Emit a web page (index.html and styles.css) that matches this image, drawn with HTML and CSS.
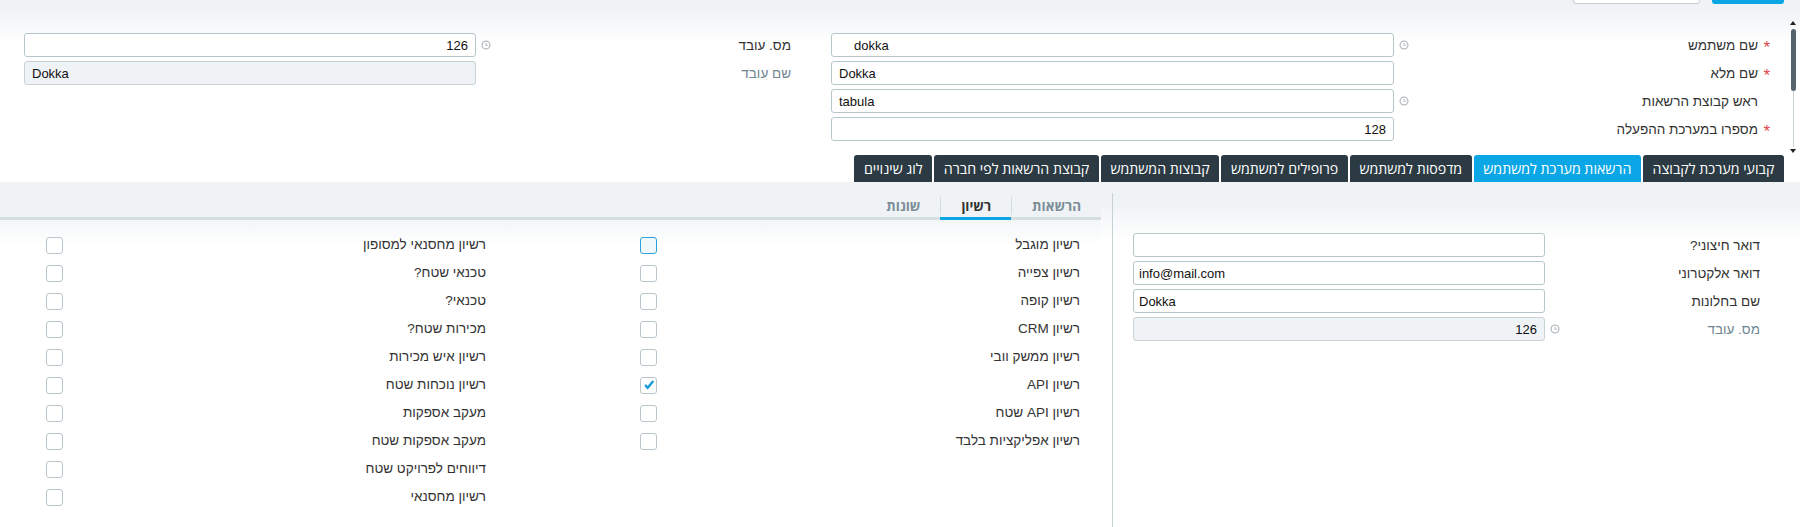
FILE: index.html
```html
<!DOCTYPE html>
<html lang="he" dir="rtl">
<head>
<meta charset="utf-8">
<title>משתמש</title>
<link rel="stylesheet" href="styles.css">
</head>
<body>
<div class="app">
  <header class="top">
    <div class="topbar">
      <span class="btn btn-primary"></span>
      <span class="btn btn-plain"></span>
    </div>
    <div class="top-body">
      <div class="vscroll">
        <span class="arrow-up"></span>
        <span class="thumb"></span>
        <span class="track"></span>
        <span class="arrow-down"></span>
      </div>
      <div class="form">
        <div class="group group-main">
          <div class="lbl"><span class="req">*</span><span>שם משתמש</span></div>
          <div class="hist"><svg viewBox="0 0 10 10" width="10" height="10"><circle cx="5" cy="5" r="3.9" fill="none" stroke="#b5bdc1" stroke-width="1.3"/><path d="M5 2.9V5.3H6.9" fill="none" stroke="#b5bdc1" stroke-width="1.1"/></svg></div>
          <div class="inp indent">dokka</div>

          <div class="lbl"><span class="req">*</span><span>שם מלא</span></div>
          <div class="hist"></div>
          <div class="inp">Dokka</div>

          <div class="lbl"><span class="req"></span><span>ראש קבוצת הרשאות</span></div>
          <div class="hist"><svg viewBox="0 0 10 10" width="10" height="10"><circle cx="5" cy="5" r="3.9" fill="none" stroke="#b5bdc1" stroke-width="1.3"/><path d="M5 2.9V5.3H6.9" fill="none" stroke="#b5bdc1" stroke-width="1.1"/></svg></div>
          <div class="inp">tabula</div>

          <div class="lbl"><span class="req">*</span><span>מספרו במערכת ההפעלה</span></div>
          <div class="hist"></div>
          <div class="inp num">128</div>
        </div>
        <div class="group group-side">
          <div class="lbl"><span>מס. עובד</span></div>
          <div class="hist"><svg viewBox="0 0 10 10" width="10" height="10"><circle cx="5" cy="5" r="3.9" fill="none" stroke="#b5bdc1" stroke-width="1.3"/><path d="M5 2.9V5.3H6.9" fill="none" stroke="#b5bdc1" stroke-width="1.1"/></svg></div>
          <div class="inp num">126</div>

          <div class="lbl muted"><span>שם עובד</span></div>
          <div class="hist"></div>
          <div class="inp ro">Dokka</div>
        </div>
      </div>
    </div>
  </header>

  <nav class="tabs">
    <span class="tab">קבועי מערכת לקבוצה</span>
    <span class="tab active">הרשאות מערכת למשתמש</span>
    <span class="tab">מדפסות למשתמש</span>
    <span class="tab">פרופילים למשתמש</span>
    <span class="tab">קבוצות המשתמש</span>
    <span class="tab">קבוצת הרשאות לפי חברה</span>
    <span class="tab">לוג שינויים</span>
  </nav>

  <main class="content">
    <section class="panel-right">
      <div class="grid-right">
        <div class="lbl"><span>דואר חיצוני?</span></div>
        <div class="hist"></div>
        <div class="inp"></div>

        <div class="lbl"><span>דואר אלקטרוני</span></div>
        <div class="hist"></div>
        <div class="inp tight">info@mail.com</div>

        <div class="lbl"><span>שם בחלונות</span></div>
        <div class="hist"></div>
        <div class="inp tight">Dokka</div>

        <div class="lbl muted"><span>מס. עובד</span></div>
        <div class="hist"><svg viewBox="0 0 10 10" width="10" height="10"><circle cx="5" cy="5" r="3.9" fill="none" stroke="#b5bdc1" stroke-width="1.3"/><path d="M5 2.9V5.3H6.9" fill="none" stroke="#b5bdc1" stroke-width="1.1"/></svg></div>
        <div class="inp ro num">126</div>
      </div>
    </section>

    <section class="panel-left">
      <div class="subtabs">
        <span class="subtab"><span class="sublabel sep">הרשאות</span></span>
        <span class="subtab active"><span class="sublabel sep">רשיון</span></span>
        <span class="subtab"><span class="sublabel">שונות</span></span>
      </div>
      <div class="checks">
        <div class="col col-a">
          <div class="crow"><span class="clbl">רשיון מוגבל</span><span class="cbox focus"></span></div>
          <div class="crow"><span class="clbl">רשיון צפייה</span><span class="cbox"></span></div>
          <div class="crow"><span class="clbl">רשיון קופה</span><span class="cbox"></span></div>
          <div class="crow"><span class="clbl">רשיון CRM</span><span class="cbox"></span></div>
          <div class="crow"><span class="clbl">רשיון ממשק וובי</span><span class="cbox"></span></div>
          <div class="crow"><span class="clbl">רשיון API</span><span class="cbox"><svg viewBox="0 0 10 10" width="10" height="10"><path d="M1.8 5.6L3.6 8L8.6 1.8" fill="none" stroke="#1b9ad8" stroke-width="2.4" stroke-linecap="round" stroke-linejoin="round"/></svg></span></div>
          <div class="crow"><span class="clbl">רשיון API שטח</span><span class="cbox"></span></div>
          <div class="crow"><span class="clbl">רשיון אפליקציות בלבד</span><span class="cbox"></span></div>
        </div>
        <div class="col col-b">
          <div class="crow"><span class="clbl">רשיון מחסנאי למסופון</span><span class="cbox"></span></div>
          <div class="crow"><span class="clbl">טכנאי שטח?</span><span class="cbox"></span></div>
          <div class="crow"><span class="clbl">טכנאי?</span><span class="cbox"></span></div>
          <div class="crow"><span class="clbl">מכירות שטח?</span><span class="cbox"></span></div>
          <div class="crow"><span class="clbl">רשיון איש מכירות</span><span class="cbox"></span></div>
          <div class="crow"><span class="clbl">רשיון נוכחות שטח</span><span class="cbox"></span></div>
          <div class="crow"><span class="clbl">מעקב אספקות</span><span class="cbox"></span></div>
          <div class="crow"><span class="clbl">מעקב אספקות שטח</span><span class="cbox"></span></div>
          <div class="crow"><span class="clbl">דיווחים לפרויקט שטח</span><span class="cbox"></span></div>
          <div class="crow"><span class="clbl">רשיון מחסנאי</span><span class="cbox"></span></div>
        </div>
      </div>
    </section>
  </main>
</div>
</body>
</html>
```

FILE: styles.css
```css
* { box-sizing: border-box; }

html, body {
  margin: 0;
  padding: 0;
}

body {
  width: 1800px;
  height: 527px;
  overflow: hidden;
  background: #ffffff;
  font-family: "Liberation Sans", Arial, sans-serif;
  font-size: 13px;
  color: #333333;
}

.app {
  display: flex;
  flex-direction: column;
}

/* ---------- top area ---------- */
.top {
  height: 155px;
  background: linear-gradient(to bottom, #eef2f4 0px, #f4f6f8 20px, #ffffff 42px);
}

.topbar {
  height: 5px;
  overflow: hidden;
  display: flex;
  gap: 12px;
  padding-right: 16px;
}

.btn {
  display: block;
  height: 20px;
  margin-top: -16px;
  border-radius: 3px;
}

.btn-primary {
  width: 72px;
  background: #0aa6e5;
}

.btn-plain {
  width: 127px;
  background: #ffffff;
  border: 1px solid #c3cdd2;
}

.top-body {
  display: flex;
  height: 150px;
}

.vscroll {
  width: 14px;
  display: flex;
  flex-direction: column;
  align-items: center;
  padding-top: 16px;
}

.arrow-up {
  width: 0;
  height: 0;
  border-left: 3px solid transparent;
  border-right: 3px solid transparent;
  border-bottom: 4px solid #222;
}

.thumb {
  width: 5px;
  height: 62px;
  margin-top: 4px;
  border-radius: 3px;
  background: #55646d;
}

.track {
  width: 1px;
  height: 56px;
  background: #c9d2d6;
}

.arrow-down {
  width: 0;
  height: 0;
  margin-top: 2px;
  border-left: 3px solid transparent;
  border-right: 3px solid transparent;
  border-top: 4px solid #222;
}

.form {
  flex: 1;
  display: flex;
  align-items: flex-start;
  gap: 31px;
  padding-top: 28px;
  padding-right: 6px;
}

.group {
  display: grid;
  grid-auto-rows: 24px;
  row-gap: 4px;
  align-items: center;
}

.group-main {
  width: 949px;
  grid-template-columns: 366px 20px 563px;
}

.group-side {
  width: 776px;
  grid-template-columns: 304px 20px 452px;
}

.lbl {
  display: flex;
  align-items: center;
  height: 24px;
  padding-right: 11px;
  color: #333333;
  white-space: nowrap;
  font-size: 13.5px;
}

.group-side .lbl { padding-right: 9px; }

.lbl.muted { color: #6f8593; }

.req {
  width: 12px;
  flex: none;
  color: #e0474c;
  font-size: 17px;
  line-height: 1;
  padding-top: 4px;
  margin-right: -1px;
}

.hist {
  display: flex;
  align-items: center;
  justify-content: center;
  height: 24px;
}

.hist svg { display: block; }

.inp {
  height: 24px;
  border: 1px solid #b7c6cb;
  border-radius: 3px;
  background: #ffffff;
  padding: 0 7px;
  display: flex;
  align-items: center;
  direction: ltr;
  color: #111111;
  font-size: 13px;
  white-space: nowrap;
}

.inp.indent { padding-left: 22px; }
.inp.tight { padding-left: 5px; }
.inp.num { justify-content: flex-end; }
.inp.ro { background: #f0f3f6; border-color: #c7d3d7; }

/* ---------- main tabs ---------- */
.tabs {
  display: flex;
  gap: 2px;
  height: 27px;
  padding-right: 16px;
  background: #ffffff;
}

.tab {
  display: flex;
  align-items: center;
  padding: 0 9.6px;
  background: #2b3a43;
  color: #ffffff;
  border-radius: 3px 3px 0 0;
  font-family: "Open Sans", "Liberation Sans", Arial, sans-serif;
  font-size: 14.2px;
  white-space: nowrap;
}

.tab.active { background: #0aa6e5; }

/* ---------- content ---------- */
.content {
  display: flex;
  gap: 11px;
  height: 345px;
  background: linear-gradient(to bottom, #f0f3f5 0px, #f0f3f5 22px, #ffffff 58px);
}

.panel-right {
  width: 688px;
  margin-top: 11px;
  border-left: 1px solid #c6d1d5;
  padding: 40px 40px 0 20px;
}

.grid-right {
  display: grid;
  grid-template-columns: 195px 20px 412px;
  grid-auto-rows: 24px;
  row-gap: 4px;
  align-items: center;
}

.grid-right .lbl { padding-right: 0; }

.panel-left {
  width: 1101px;
  display: flex;
  flex-direction: column;
}

.subtabs {
  display: flex;
  align-items: flex-end;
  height: 38px;
  background: linear-gradient(to top, #d4dde0 0px, #d4dde0 3px, #f0f3f5 3px);
}

.subtab {
  display: flex;
  align-items: center;
  padding: 0 0 2px 0;
  border-bottom: 3px solid transparent;
  font-family: "Open Sans", "Liberation Sans", Arial, sans-serif;
  font-weight: bold;
  font-size: 13.5px;
  color: #7b8d97;
}

.subtab.active {
  border-bottom-color: #0aa6e5;
  color: #333333;
}

.sublabel {
  display: block;
  line-height: 18px;
  padding: 0 20px;
}

.sublabel.sep { border-left: 1px solid #d3dcdf; }

.checks {
  flex: 1;
  display: flex;
  align-items: flex-start;
  padding-top: 11px;
  background: linear-gradient(to bottom, #f3f6f7 0px, #ffffff 26px);
}

.col {
  display: flex;
  flex-direction: column;
}

.col-a { width: 594px; }
.col-b { flex: 1; }

.crow {
  display: grid;
  grid-template-columns: 444px 17px 1fr;
  height: 28px;
  align-items: center;
}

.clbl {
  padding-right: 21px;
  color: #333333;
  white-space: nowrap;
  font-size: 13.5px;
  padding-bottom: 2px;
}

.cbox {
  width: 17px;
  height: 17px;
  border: 1px solid #b9c5cb;
  border-radius: 3px;
  background: #ffffff;
  display: flex;
  align-items: center;
  justify-content: center;
}

.cbox svg { display: block; }

.cbox.focus {
  border-color: #2aa3dd;
  background: #f1f8fc;
}
```
